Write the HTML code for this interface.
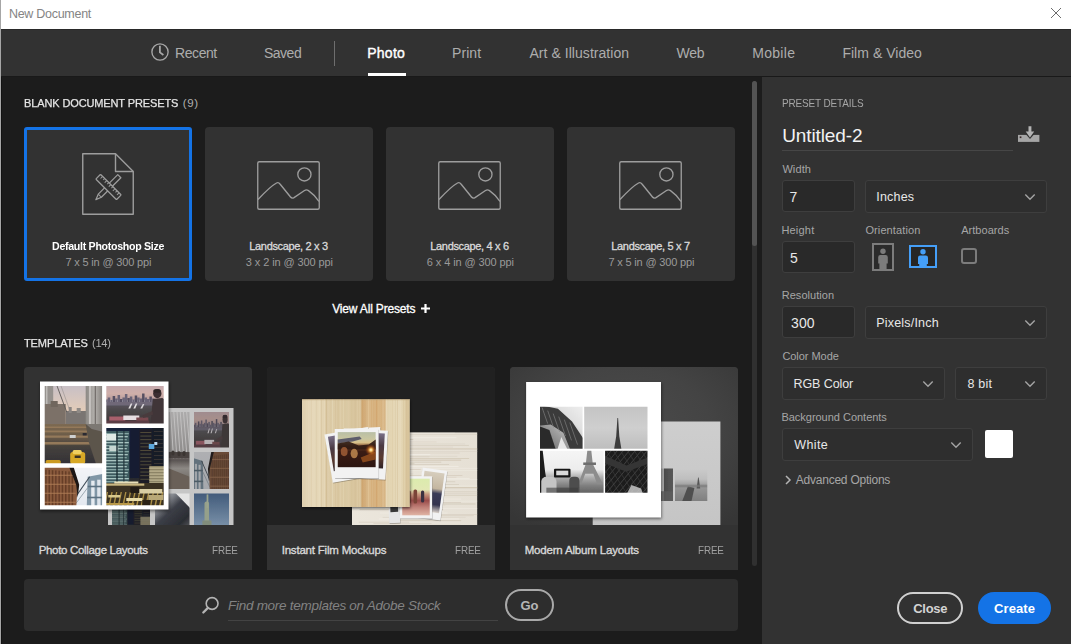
<!DOCTYPE html>
<html lang="en"><head><meta charset="utf-8"><title>New Document</title>
<style>
*{box-sizing:border-box;margin:0;padding:0}
html,body{width:1071px;height:644px;overflow:hidden;background:#1c1c1c}
body{font-family:"Liberation Sans",sans-serif;position:relative;-webkit-font-smoothing:antialiased}
.a{position:absolute}
.t{position:absolute;white-space:nowrap;transform-origin:0 50%;display:block}
#win{position:absolute;left:0;top:0;width:1071px;height:644px;background:#1c1c1c;overflow:hidden}
#titlebar{left:0;top:0;width:1071px;height:29px;background:#fff}
#edge-l{left:0;top:0;width:1px;height:644px;background:#a6a6a6}
#edge-l2{left:1px;top:29px;width:1px;height:615px;background:rgba(0,0,0,.35)}
#tabs{left:1px;top:29px;width:1070px;height:48px;background:#323232;border-top:1px solid #292929;border-bottom:1px solid #191919}
#tab-ul{left:368px;top:73px;width:38px;height:3px;background:#fff}
#tab-div{left:334px;top:41px;width:1px;height:25px;background:#6e6e6e}
#right{left:762px;top:77px;width:309px;height:567px;background:#323232}
.card{position:absolute;top:127px;width:168px;height:154px;background:#323232;border-radius:4px}
.card.sel{border:3px solid #1473e6;border-radius:3px}
.tcard{position:absolute;top:367px;width:228px;height:203px;background:#323232;border-radius:4px 4px 0 0;overflow:hidden}
.thumb{position:absolute;left:0;top:0;width:228px;height:158px;overflow:hidden}
#search{left:24px;top:579px;width:714px;height:52px;background:#2d2d2d;border-radius:4px}
#search-ul{left:228px;top:620px;width:270px;height:1px;background:#434343}
.pill{position:absolute;border-radius:16px}
#go{left:505px;top:589px;width:49px;height:32px;border:2px solid #a9a9a9}
#close{left:897px;top:592px;width:66px;height:32px;border:2px solid #d0d0d0}
#create{left:978px;top:592px;width:73px;height:32px;background:#1473e6}
.inp{position:absolute;height:32px;background:#292929;border:1px solid #3e3e3e;border-radius:3px}
.sel2{position:absolute;height:33px;background:#2e2e2e;border:1px solid #3e3e3e;border-radius:3px}
#name-ul{left:782px;top:150px;width:231px;height:1px;background:#464646}
#swatch{left:985px;top:430px;width:28px;height:28px;background:#fff;border-radius:2px}
#sb{left:752px;top:81px;width:5px;height:165px;background:#535353;border-radius:3px}
#sbtrack{left:752px;top:81px;width:5px;height:485px;background:#303030;border-radius:3px}
#chk{left:961px;top:248px;width:16px;height:16px;border:2px solid #7c7c7c;border-radius:3px}
svg{position:absolute;overflow:visible}
nav,main,aside,section{display:block;position:static}
</style></head>
<body>
<div id="win">
<div id="titlebar" class="a">
<span class="t" style="left:8.90px;top:6.30px;font-size:12.5px;line-height:16px;color:#848484;letter-spacing:-0.273px;">New Document</span>
<svg class="a" style="left:1051px;top:8px" width="10" height="10" viewBox="0 0 10 10"><path d="M0 0 L10 10 M10 0 L0 10" stroke="#6c6c6c" stroke-width="1" fill="none"/></svg>
</div>
<div id="edge-l" class="a"></div><div id="edge-l2" class="a"></div>
<nav>
<div id="tabs" class="a"></div>
<svg class="a" style="left:150.5px;top:42.6px" width="18" height="18" viewBox="0 0 18 18"><circle cx="9" cy="9" r="8.1" fill="none" stroke="#a8a8a8" stroke-width="1.35"/><path d="M8.9 2.8 V9.4 L12.4 11.9" fill="none" stroke="#a8a8a8" stroke-width="1.8"/></svg>
<span class="t" style="left:175.00px;top:44.00px;font-size:14.0px;line-height:18px;color:#adadad;letter-spacing:-0.420px;">Recent</span>
<span class="t" style="left:263.90px;top:44.00px;font-size:14.0px;line-height:18px;color:#adadad;letter-spacing:-0.475px;">Saved</span>
<div id="tab-div" class="a"></div>
<span class="t" style="left:367.30px;top:44.00px;font-size:14.0px;line-height:18px;color:#ffffff;letter-spacing:0.225px;-webkit-text-stroke:0.4px #ffffff;">Photo</span>
<div id="tab-ul" class="a"></div>
<span class="t" style="left:452.00px;top:44.00px;font-size:14.0px;line-height:18px;color:#adadad;letter-spacing:0.075px;">Print</span>
<span class="t" style="left:529.40px;top:44.00px;font-size:14.0px;line-height:18px;color:#adadad;letter-spacing:0.053px;">Art &amp; Illustration</span>
<span class="t" style="left:676.50px;top:44.00px;font-size:14.0px;line-height:18px;color:#adadad;letter-spacing:-0.250px;">Web</span>
<span class="t" style="left:752.20px;top:44.00px;font-size:14.0px;line-height:18px;color:#adadad;letter-spacing:0.300px;">Mobile</span>
<span class="t" style="left:842.40px;top:44.00px;font-size:14.0px;line-height:18px;color:#adadad;letter-spacing:0.036px;">Film &amp; Video</span>
</nav>
<main>
<section>
<span class="t" style="left:23.57px;top:96.00px;font-size:11.5px;line-height:15px;color:#e6e6e6;letter-spacing:-0.138px;-webkit-text-stroke:0.25px #e6e6e6;transform:scaleX(0.9578);">BLANK DOCUMENT PRESETS</span>
<span class="t" style="left:182.80px;top:96.00px;font-size:11.5px;line-height:15px;color:#b0b0b0;letter-spacing:0.600px;">(9)</span>
<div class="card sel" style="left:24px"></div>
<svg class="a" style="left:82px;top:153px" width="52" height="62" viewBox="0 0 52 62"><path d="M0.75 0.75 H33.5 L51.25 18.5 V61.25 H0.75 Z" fill="none" stroke="#9d9d9d" stroke-width="1.4" stroke-linejoin="round"/><path d="M33.5 0.75 V18.5 H51.25" fill="none" stroke="#9d9d9d" stroke-width="1.4" stroke-linejoin="round"/><g transform="translate(26.3 34.2) rotate(-45)"><path d="M-12 -2.2 H15.6 V2.2 H-12 L-17.6 0 Z" fill="#323232" stroke="#9d9d9d" stroke-width="1.25" stroke-linejoin="round"/><path d="M-12 -2.2 V2.2" stroke="#9d9d9d" stroke-width="1"/></g><g transform="translate(26.5 34) rotate(45)"><rect x="-14.6" y="-3.3" width="29.2" height="6.6" rx="0.6" fill="#323232" stroke="#9d9d9d" stroke-width="1.25"/><path d="M-11.6 -3.3 v2.9" stroke="#9d9d9d" stroke-width="1" fill="none"/><path d="M-8.7 -3.3 v2.1" stroke="#9d9d9d" stroke-width="1" fill="none"/><path d="M-5.8 -3.3 v2.9" stroke="#9d9d9d" stroke-width="1" fill="none"/><path d="M-2.9 -3.3 v2.1" stroke="#9d9d9d" stroke-width="1" fill="none"/><path d="M0.0 -3.3 v2.9" stroke="#9d9d9d" stroke-width="1" fill="none"/><path d="M2.9 -3.3 v2.1" stroke="#9d9d9d" stroke-width="1" fill="none"/><path d="M5.8 -3.3 v2.9" stroke="#9d9d9d" stroke-width="1" fill="none"/><path d="M8.7 -3.3 v2.1" stroke="#9d9d9d" stroke-width="1" fill="none"/><path d="M11.6 -3.3 v2.9" stroke="#9d9d9d" stroke-width="1" fill="none"/></g></svg>
<span class="t" style="left:52.03px;top:239.00px;font-size:11.0px;line-height:14px;color:#ffffff;letter-spacing:-0.308px;font-weight:700;transform:scaleX(0.9660);">Default Photoshop Size</span>
<span class="t" style="left:65.40px;top:254.60px;font-size:11.0px;line-height:14px;color:#9a9a9a;letter-spacing:-0.165px;">7 x 5 in @ 300 ppi</span>
<div class="card" style="left:205px"></div>
<svg class="a" style="left:257px;top:161px" width="63" height="49" viewBox="0 0 63 49"><rect x="0.75" y="0.75" width="61.5" height="47.5" rx="1.5" fill="none" stroke="#9d9d9d" stroke-width="1.35"/><circle cx="47.4" cy="13.4" r="6.6" fill="none" stroke="#9d9d9d" stroke-width="1.35"/><path d="M1 38.5 C8 31 14 25 19.5 22 Q21.5 21 23 23 L33.5 36 Q35 37.8 37 36.6 L47.5 29.5 Q49.5 28.3 51.5 29.6 C55 32 59 36 62 40.5" fill="none" stroke="#9d9d9d" stroke-width="1.35" stroke-linejoin="round"/></svg>
<span class="t" style="left:249.30px;top:239.00px;font-size:11.0px;line-height:14px;color:#dadada;letter-spacing:-0.333px;-webkit-text-stroke:0.3px #dadada;">Landscape, 2 x 3</span>
<span class="t" style="left:245.85px;top:254.60px;font-size:11.0px;line-height:14px;color:#9a9a9a;letter-spacing:-0.100px;">3 x 2 in @ 300 ppi</span>
<div class="card" style="left:386px"></div>
<svg class="a" style="left:438px;top:161px" width="63" height="49" viewBox="0 0 63 49"><rect x="0.75" y="0.75" width="61.5" height="47.5" rx="1.5" fill="none" stroke="#9d9d9d" stroke-width="1.35"/><circle cx="47.4" cy="13.4" r="6.6" fill="none" stroke="#9d9d9d" stroke-width="1.35"/><path d="M1 38.5 C8 31 14 25 19.5 22 Q21.5 21 23 23 L33.5 36 Q35 37.8 37 36.6 L47.5 29.5 Q49.5 28.3 51.5 29.6 C55 32 59 36 62 40.5" fill="none" stroke="#9d9d9d" stroke-width="1.35" stroke-linejoin="round"/></svg>
<span class="t" style="left:430.30px;top:239.00px;font-size:11.0px;line-height:14px;color:#dadada;letter-spacing:-0.333px;-webkit-text-stroke:0.3px #dadada;">Landscape, 4 x 6</span>
<span class="t" style="left:426.85px;top:254.60px;font-size:11.0px;line-height:14px;color:#9a9a9a;letter-spacing:-0.100px;">6 x 4 in @ 300 ppi</span>
<div class="card" style="left:567px"></div>
<svg class="a" style="left:619px;top:161px" width="63" height="49" viewBox="0 0 63 49"><rect x="0.75" y="0.75" width="61.5" height="47.5" rx="1.5" fill="none" stroke="#9d9d9d" stroke-width="1.35"/><circle cx="47.4" cy="13.4" r="6.6" fill="none" stroke="#9d9d9d" stroke-width="1.35"/><path d="M1 38.5 C8 31 14 25 19.5 22 Q21.5 21 23 23 L33.5 36 Q35 37.8 37 36.6 L47.5 29.5 Q49.5 28.3 51.5 29.6 C55 32 59 36 62 40.5" fill="none" stroke="#9d9d9d" stroke-width="1.35" stroke-linejoin="round"/></svg>
<span class="t" style="left:611.30px;top:239.00px;font-size:11.0px;line-height:14px;color:#dadada;letter-spacing:-0.333px;-webkit-text-stroke:0.3px #dadada;">Landscape, 5 x 7</span>
<span class="t" style="left:608.40px;top:254.60px;font-size:11.0px;line-height:14px;color:#9a9a9a;letter-spacing:-0.165px;">7 x 5 in @ 300 ppi</span>
<span class="t" style="left:332.25px;top:300.70px;font-size:12.0px;line-height:16px;color:#ffffff;letter-spacing:-0.173px;-webkit-text-stroke:0.3px #ffffff;">View All Presets</span>
<svg class="a" style="left:421px;top:304px" width="9" height="9" viewBox="0 0 9 9"><path d="M4.5 0 V9 M0 4.5 H9" stroke="#fff" stroke-width="2.2" fill="none"/></svg>
</section>
<section>
<span class="t" style="left:24.02px;top:336.00px;font-size:11.5px;line-height:15px;color:#e6e6e6;letter-spacing:-0.138px;-webkit-text-stroke:0.25px #e6e6e6;transform:scaleX(0.9598);">TEMPLATES</span>
<span class="t" style="left:92.43px;top:336.00px;font-size:11.5px;line-height:15px;color:#b0b0b0;letter-spacing:-0.322px;transform:scaleX(0.9704);">(14)</span>
<div class="tcard" style="left:24px"><div class="thumb"><svg width="228" height="158" viewBox="0 0 228 158" style="position:absolute;left:0;top:0;overflow:hidden"><defs><filter id="sh1" x="-10%" y="-10%" width="120%" height="120%"><feGaussianBlur stdDeviation="1.6"/></filter></defs><rect x="84.00" y="41.00" width="125.50" height="120.00" fill="#c6c6c6" /><g transform="translate(144.50 45.00)" ><defs><clipPath id="c3"><rect x="0" y="0" width="21.00" height="77.00"/></clipPath><filter id="f4" x="-10%" y="-10%" width="120%" height="120%"><feGaussianBlur stdDeviation="0.5"/></filter><linearGradient id="lg2" x1="0" y1="0" x2="0" y2="1"><stop offset="0" stop-color="#aeadad"/><stop offset="0.5" stop-color="#8f8d8c"/><stop offset="0.62" stop-color="#5a5452"/><stop offset="0.72" stop-color="#8c8884"/><stop offset="1" stop-color="#5a534d"/></linearGradient></defs><g clip-path="url(#c3)"><g filter="url(#f4)"><rect x="-2.00" y="-2.00" width="25.00" height="81.00" fill="url(#lg2)" /><line x1="2.0" y1="-2.0" x2="5.0" y2="46.2" stroke="#c9c8c8" stroke-width="0.8" /><line x1="5.2" y1="-2.0" x2="8.4" y2="46.2" stroke="#c9c8c8" stroke-width="0.8" /><line x1="8.4" y1="-2.0" x2="11.8" y2="46.2" stroke="#c9c8c8" stroke-width="0.8" /><line x1="11.6" y1="-2.0" x2="15.2" y2="46.2" stroke="#c9c8c8" stroke-width="0.8" /><line x1="14.8" y1="-2.0" x2="18.6" y2="46.2" stroke="#c9c8c8" stroke-width="0.8" /><line x1="18.0" y1="-2.0" x2="22.0" y2="46.2" stroke="#c9c8c8" stroke-width="0.8" /><rect x="-2.00" y="40.04" width="25.00" height="6.00" fill="#4a4341" /><rect x="3.00" y="38.50" width="3.00" height="5.00" fill="#3a3432" rx="1.5"/><rect x="9.00" y="39.27" width="3.00" height="5.00" fill="#3a3432" rx="1.5"/><rect x="14.00" y="38.88" width="3.00" height="5.00" fill="#3a3432" rx="1.5"/><polygon points="-2.0,55.4 23.0,65.5 23.0,79.0 -2.0,79.0" fill="#6a6058" /></g></g></g><g transform="translate(170.00 45.00)" ><defs><clipPath id="c7"><rect x="0" y="0" width="35.00" height="35.50"/></clipPath><filter id="f8" x="-10%" y="-10%" width="120%" height="120%"><feGaussianBlur stdDeviation="0.5"/></filter><linearGradient id="lg5" x1="0" y1="0" x2="0" y2="1"><stop offset="0" stop-color="#c3a9b0"/><stop offset="0.6" stop-color="#d0afa9"/><stop offset="1" stop-color="#b89c9c"/></linearGradient><linearGradient id="lg6" x1="0" y1="0" x2="0" y2="1"><stop offset="0" stop-color="#5b5560"/><stop offset="0.4" stop-color="#4a4748"/><stop offset="1" stop-color="#3a3033"/></linearGradient></defs><g clip-path="url(#c7)"><g filter="url(#f8)"><g transform="scale(0.6098 0.9441)"><rect x="-2.00" y="-2.00" width="62.00" height="16.00" fill="url(#lg5)" /><rect x="-1.00" y="13.50" width="2.50" height="4.00" fill="#575062" /><rect x="1.45" y="11.50" width="2.50" height="6.00" fill="#6b6477" /><rect x="3.90" y="14.00" width="2.50" height="3.50" fill="#6b6477" /><rect x="6.35" y="10.00" width="2.50" height="7.50" fill="#575062" /><rect x="8.80" y="12.50" width="2.50" height="5.00" fill="#6b6477" /><rect x="11.25" y="9.00" width="2.50" height="8.50" fill="#6b6477" /><rect x="13.70" y="13.00" width="2.50" height="4.50" fill="#575062" /><rect x="16.15" y="11.50" width="2.50" height="6.00" fill="#6b6477" /><rect x="18.60" y="8.00" width="2.50" height="9.50" fill="#6b6477" /><rect x="21.05" y="12.00" width="2.50" height="5.50" fill="#575062" /><rect x="23.50" y="10.50" width="2.50" height="7.00" fill="#6b6477" /><rect x="25.95" y="13.50" width="2.50" height="4.00" fill="#6b6477" /><rect x="28.40" y="9.50" width="2.50" height="8.00" fill="#575062" /><rect x="30.85" y="11.50" width="2.50" height="6.00" fill="#6b6477" /><rect x="33.30" y="12.50" width="2.50" height="5.00" fill="#6b6477" /><rect x="35.75" y="7.50" width="2.50" height="10.00" fill="#575062" /><rect x="38.20" y="11.50" width="2.50" height="6.00" fill="#6b6477" /><rect x="40.65" y="13.00" width="2.50" height="4.50" fill="#6b6477" /><rect x="43.10" y="10.50" width="2.50" height="7.00" fill="#575062" /><rect x="45.55" y="12.50" width="2.50" height="5.00" fill="#6b6477" /><rect x="-2.00" y="16.00" width="62.00" height="24.00" fill="url(#lg6)" /><rect x="-2.00" y="16.00" width="62.00" height="3.50" fill="#6f6878" /><polygon points="22.0,22.5 24.5,17.5 26.0,17.5 24.0,22.5" fill="#e4e0e2" /><polygon points="27.0,22.5 29.5,17.5 31.0,17.5 29.0,22.5" fill="#e4e0e2" /><polygon points="34.0,22.5 36.5,18.0 38.0,18.0 36.0,22.5" fill="#d8d4d8" /><rect x="3.00" y="30.50" width="16.00" height="6.00" fill="#a8606c" /><rect x="17.00" y="29.50" width="16.00" height="4.50" fill="#e6dfe2" /><rect x="30.00" y="31.50" width="12.00" height="5.00" fill="#7a4a50" /><rect x="-2.00" y="34.50" width="45.00" height="5.00" fill="#5a3c44" /><ellipse cx="51" cy="7.6" rx="4.2" ry="4.6" fill="#3b2f32"/><rect x="47.00" y="3.20" width="7.50" height="3.50" fill="#2e2528" rx="1.7"/><polygon points="46.5,13.0 56.0,12.0 59.0,14.0 59.0,40.0 44.5,40.0 45.5,24.0" fill="#3f3538" /><polygon points="36.0,29.5 46.0,25.0 47.0,28.5 37.0,32.0" fill="#4a3a3c" /><rect x="-2.00" y="-2.00" width="62.00" height="42.00" fill="rgba(60,60,60,.28)" /></g></g></g></g><g transform="translate(170.00 85.00)" ><defs><clipPath id="c10"><rect x="0" y="0" width="35.00" height="37.00"/></clipPath><filter id="f11" x="-10%" y="-10%" width="120%" height="120%"><feGaussianBlur stdDeviation="0.5"/></filter><linearGradient id="lg9" x1="0" y1="0" x2="0" y2="1"><stop offset="0" stop-color="#f3f4f8"/><stop offset="1" stop-color="#e3e8ef"/></linearGradient></defs><g clip-path="url(#c10)"><g filter="url(#f11)"><g transform="scale(0.6098 0.9867) translate(57.4 0) scale(-1 1)"><rect x="-2.00" y="-2.00" width="62.00" height="42.00" fill="url(#lg9)" /><polygon points="43.0,9.0 59.0,6.0 59.0,40.0 42.0,40.0" fill="#8096a6" /><rect x="46.50" y="13.00" width="3.40" height="27.00" fill="#e6ebf0" /><rect x="52.50" y="12.00" width="3.40" height="28.00" fill="#dfe5ec" /><rect x="43.00" y="18.00" width="16.00" height="1.60" fill="#5c7282" /><rect x="42.50" y="29.00" width="17.00" height="1.60" fill="#5c7282" /><line x1="31.0" y1="29.0" x2="45.0" y2="9.0" stroke="#3e4a56" stroke-width="1.1" /><line x1="31.0" y1="36.0" x2="43.0" y2="20.0" stroke="#7d8c98" stroke-width="0.7" /><polygon points="-2.0,-2.0 26.0,-2.0 33.0,17.0 31.5,40.0 -2.0,40.0" fill="#8a5a3c" /><rect x="0.50" y="2.00" width="1.50" height="38.00" fill="#5a3522" opacity=".75"/><rect x="3.80" y="2.25" width="1.50" height="38.00" fill="#5a3522" opacity=".75"/><rect x="7.10" y="2.50" width="1.50" height="38.00" fill="#5a3522" opacity=".75"/><rect x="10.40" y="2.75" width="1.50" height="38.00" fill="#5a3522" opacity=".75"/><rect x="13.70" y="3.00" width="1.50" height="38.00" fill="#5a3522" opacity=".75"/><rect x="17.00" y="3.25" width="1.50" height="38.00" fill="#5a3522" opacity=".75"/><rect x="20.30" y="3.50" width="1.50" height="38.00" fill="#5a3522" opacity=".75"/><rect x="23.60" y="3.75" width="1.50" height="38.00" fill="#5a3522" opacity=".75"/><rect x="26.90" y="4.00" width="1.50" height="38.00" fill="#5a3522" opacity=".75"/><rect x="-2.00" y="7.00" width="33.00" height="1.20" fill="#b4805a" opacity=".7"/><rect x="-2.00" y="16.00" width="33.00" height="1.20" fill="#b4805a" opacity=".7"/><rect x="-2.00" y="25.00" width="33.00" height="1.20" fill="#b4805a" opacity=".7"/><rect x="-2.00" y="34.00" width="33.00" height="1.20" fill="#b4805a" opacity=".7"/><polygon points="24.0,-2.0 28.5,-2.0 34.5,17.0 33.0,30.0 31.5,17.0" fill="#1b1512" /><rect x="-2.00" y="-2.00" width="62.00" height="42.00" fill="rgba(50,50,50,.35)" /></g></g></g></g><g transform="translate(88.00 126.50)" ><defs><clipPath id="c13"><rect x="0" y="0" width="38.00" height="32.00"/></clipPath><filter id="f14" x="-10%" y="-10%" width="120%" height="120%"><feGaussianBlur stdDeviation="0.5"/></filter><linearGradient id="lg12" x1="0" y1="0" x2="0" y2="1"><stop offset="0" stop-color="#16213a"/><stop offset="0.55" stop-color="#1a2236"/><stop offset="0.75" stop-color="#3a3526"/><stop offset="1" stop-color="#8a7236"/></linearGradient></defs><g clip-path="url(#c13)"><g filter="url(#f14)"><g transform="translate(0 -2.00) scale(0.6620)"><rect x="-2.00" y="-2.00" width="62.00" height="82.00" fill="url(#lg12)" /><rect x="-2.00" y="3.00" width="25.00" height="52.00" fill="#3e5a5e" /><rect x="-2.00" y="5.00" width="24.50" height="1.30" fill="#86a6a4" /><rect x="-2.00" y="8.00" width="23.50" height="1.30" fill="#a8c4c0" /><rect x="-2.00" y="11.00" width="22.50" height="1.30" fill="#86a6a4" /><rect x="-2.00" y="14.00" width="24.50" height="1.30" fill="#a8c4c0" /><rect x="-2.00" y="17.00" width="23.50" height="1.30" fill="#86a6a4" /><rect x="-2.00" y="20.00" width="22.50" height="1.30" fill="#a8c4c0" /><rect x="-2.00" y="23.00" width="24.50" height="1.30" fill="#86a6a4" /><rect x="-2.00" y="26.00" width="23.50" height="1.30" fill="#a8c4c0" /><rect x="-2.00" y="29.00" width="22.50" height="1.30" fill="#86a6a4" /><rect x="-2.00" y="32.00" width="24.50" height="1.30" fill="#a8c4c0" /><rect x="-2.00" y="35.00" width="23.50" height="1.30" fill="#86a6a4" /><rect x="-2.00" y="38.00" width="22.50" height="1.30" fill="#a8c4c0" /><rect x="-2.00" y="41.00" width="24.50" height="1.30" fill="#86a6a4" /><rect x="-2.00" y="44.00" width="23.50" height="1.30" fill="#a8c4c0" /><rect x="-2.00" y="47.00" width="22.50" height="1.30" fill="#86a6a4" /><rect x="-2.00" y="50.00" width="24.50" height="1.30" fill="#a8c4c0" /><rect x="-2.00" y="53.00" width="23.50" height="1.30" fill="#86a6a4" /><rect x="0.00" y="6.00" width="10.00" height="6.50" fill="#dfe8e4" /><rect x="3.00" y="18.00" width="9.00" height="5.00" fill="#c6d6d2" /><rect x="10.00" y="3.00" width="1.40" height="52.00" fill="#1c2e34" /><rect x="17.00" y="3.00" width="1.20" height="52.00" fill="#22363c" /><rect x="24.00" y="-2.00" width="9.00" height="52.00" fill="#121a32" /><rect x="33.00" y="1.00" width="13.00" height="56.00" fill="#1d1e26" /><rect x="34.00" y="4.00" width="11.00" height="0.90" fill="#55503c" /><rect x="34.00" y="7.60" width="11.00" height="0.90" fill="#55503c" /><rect x="34.00" y="11.20" width="11.00" height="0.90" fill="#55503c" /><rect x="34.00" y="14.80" width="11.00" height="0.90" fill="#55503c" /><rect x="34.00" y="18.40" width="11.00" height="0.90" fill="#55503c" /><rect x="34.00" y="22.00" width="11.00" height="0.90" fill="#55503c" /><rect x="34.00" y="25.60" width="11.00" height="0.90" fill="#55503c" /><rect x="34.00" y="29.20" width="11.00" height="0.90" fill="#55503c" /><rect x="34.00" y="32.80" width="11.00" height="0.90" fill="#55503c" /><rect x="34.00" y="36.40" width="11.00" height="0.90" fill="#55503c" /><rect x="34.00" y="40.00" width="11.00" height="0.90" fill="#55503c" /><rect x="34.00" y="43.60" width="11.00" height="0.90" fill="#55503c" /><rect x="34.00" y="47.20" width="11.00" height="0.90" fill="#55503c" /><rect x="34.00" y="50.80" width="11.00" height="0.90" fill="#55503c" /><rect x="46.00" y="-2.00" width="13.00" height="40.00" fill="#191b27" /><rect x="47.50" y="3.00" width="9.00" height="0.80" fill="#3c3a38" /><rect x="47.50" y="7.00" width="9.00" height="0.80" fill="#3c3a38" /><rect x="47.50" y="11.00" width="9.00" height="0.80" fill="#3c3a38" /><rect x="47.50" y="15.00" width="9.00" height="0.80" fill="#3c3a38" /><rect x="47.50" y="19.00" width="9.00" height="0.80" fill="#3c3a38" /><rect x="47.50" y="23.00" width="9.00" height="0.80" fill="#3c3a38" /><rect x="47.50" y="27.00" width="9.00" height="0.80" fill="#3c3a38" /><rect x="47.50" y="31.00" width="9.00" height="0.80" fill="#3c3a38" /><rect x="47.50" y="35.00" width="9.00" height="0.80" fill="#3c3a38" /><rect x="42.50" y="16.00" width="5.50" height="5.00" fill="#5aa6dc" /><rect x="48.00" y="14.00" width="3.00" height="3.00" fill="#b8d8f0" /><rect x="43.00" y="38.00" width="16.00" height="18.00" fill="#8c8466" /><rect x="43.00" y="39.50" width="16.00" height="1.20" fill="#c2ba96" /><rect x="43.00" y="42.50" width="16.00" height="1.20" fill="#c2ba96" /><rect x="43.00" y="45.50" width="16.00" height="1.20" fill="#c2ba96" /><rect x="43.00" y="48.50" width="16.00" height="1.20" fill="#c2ba96" /><rect x="43.00" y="51.50" width="16.00" height="1.20" fill="#c2ba96" /><rect x="43.00" y="54.50" width="16.00" height="1.20" fill="#c2ba96" /><rect x="-2.00" y="55.00" width="62.00" height="26.00" fill="#3b3220" /><rect x="-2.00" y="55.50" width="40.00" height="2.20" fill="#c9b782" /><rect x="8.00" y="53.50" width="24.00" height="2.00" fill="#e8dfb8" /><polygon points="-3.0,80.0 0.5,64.0 1.8,64.0 -1.4,80.0" fill="#c9a850" opacity=".8"/><polygon points="1.6,80.0 5.1,64.0 6.4,64.0 3.2,80.0" fill="#c9a850" opacity=".8"/><polygon points="6.2,80.0 9.7,64.0 11.0,64.0 7.8,80.0" fill="#c9a850" opacity=".8"/><polygon points="10.8,80.0 14.3,64.0 15.6,64.0 12.4,80.0" fill="#c9a850" opacity=".8"/><polygon points="15.4,80.0 18.9,64.0 20.2,64.0 17.0,80.0" fill="#c9a850" opacity=".8"/><polygon points="20.0,80.0 23.5,64.0 24.8,64.0 21.6,80.0" fill="#c9a850" opacity=".8"/><polygon points="24.6,80.0 28.1,64.0 29.4,64.0 26.2,80.0" fill="#c9a850" opacity=".8"/><polygon points="29.2,80.0 32.7,64.0 34.0,64.0 30.8,80.0" fill="#c9a850" opacity=".8"/><polygon points="33.8,80.0 37.3,64.0 38.6,64.0 35.4,80.0" fill="#c9a850" opacity=".8"/><polygon points="38.4,80.0 41.9,64.0 43.2,64.0 40.0,80.0" fill="#c9a850" opacity=".8"/><polygon points="43.0,80.0 46.5,64.0 47.8,64.0 44.6,80.0" fill="#c9a850" opacity=".8"/><polygon points="47.6,80.0 51.1,64.0 52.4,64.0 49.2,80.0" fill="#c9a850" opacity=".8"/><polygon points="52.2,80.0 55.7,64.0 57.0,64.0 53.8,80.0" fill="#c9a850" opacity=".8"/><polygon points="56.8,80.0 60.3,64.0 61.6,64.0 58.4,80.0" fill="#c9a850" opacity=".8"/><rect x="32.00" y="61.00" width="24.00" height="4.50" fill="#d8cda4" /><rect x="42.00" y="67.00" width="15.00" height="5.00" fill="#b8a878" /><rect x="2.00" y="67.00" width="12.00" height="2.50" fill="#d8c88c" /><rect x="20.00" y="70.00" width="16.00" height="3.00" fill="#e6d9a6" /><rect x="-2.00" y="75.00" width="30.00" height="2.00" fill="#b89848" /><rect x="24.00" y="59.00" width="9.00" height="6.00" fill="#241f14" /><rect x="36.00" y="72.00" width="8.00" height="6.00" fill="#2a2416" /><rect x="-2.00" y="-2.00" width="62.00" height="82.00" fill="rgba(40,40,40,.35)" /></g></g></g></g><g transform="translate(131.00 126.50)" ><defs><clipPath id="c16"><rect x="0" y="0" width="34.50" height="32.00"/></clipPath><filter id="f17" x="-10%" y="-10%" width="120%" height="120%"><feGaussianBlur stdDeviation="0.6"/></filter><linearGradient id="lg15" x1="0" y1="0" x2="1" y2="1"><stop offset="0" stop-color="#dcdcdc"/><stop offset="0.25" stop-color="#9a9da3"/><stop offset="0.5" stop-color="#3c3f47"/><stop offset="0.8" stop-color="#2b2d33"/><stop offset="1" stop-color="#5c5e62"/></linearGradient></defs><g clip-path="url(#c16)"><g filter="url(#f17)"><rect x="-2.00" y="-2.00" width="38.50" height="36.00" fill="url(#lg15)" /><polygon points="19.0,-2.0 36.5,-2.0 36.5,16.0" fill="#e4e4e4" /></g></g></g><g transform="translate(170.00 126.50)" ><defs><clipPath id="c19"><rect x="0" y="0" width="35.00" height="45.00"/></clipPath><filter id="f20" x="-10%" y="-10%" width="120%" height="120%"><feGaussianBlur stdDeviation="0.5"/></filter><linearGradient id="lg18" x1="0" y1="0" x2="0" y2="1"><stop offset="0" stop-color="#3f5878"/><stop offset="0.7" stop-color="#7990a8"/><stop offset="1" stop-color="#98a6b2"/></linearGradient></defs><g clip-path="url(#c19)"><g filter="url(#f20)"><rect x="-2.00" y="-2.00" width="39.00" height="49.00" fill="url(#lg18)" /><rect x="10.50" y="8.10" width="4.55" height="45.00" fill="#95a08a" rx="2"/><rect x="12.60" y="0.90" width="1.75" height="13.50" fill="#9aa48e" /><rect x="8.40" y="27.00" width="9.10" height="45.00" fill="#818d7c" /></g></g></g><rect x="16.00" y="15.50" width="129.50" height="129.00" fill="rgba(0,0,0,.45)" filter="url(#sh1)"/><rect x="16.00" y="14.50" width="128.50" height="128.00" fill="#ffffff" /><g transform="translate(20.70 19.00)" ><defs><clipPath id="c24"><rect x="0" y="0" width="57.40" height="77.20"/></clipPath><filter id="f25" x="-10%" y="-10%" width="120%" height="120%"><feGaussianBlur stdDeviation="0.55"/></filter><linearGradient id="lg21" x1="0" y1="0" x2="0" y2="1"><stop offset="0" stop-color="#c6bfc6"/><stop offset="0.75" stop-color="#e8ceb6"/><stop offset="1" stop-color="#c9b3a0"/></linearGradient><linearGradient id="lg22" x1="0" y1="0" x2="0" y2="1"><stop offset="0" stop-color="#7d6a52"/><stop offset="0.3" stop-color="#6a5a48"/><stop offset="0.55" stop-color="#45403c"/><stop offset="1" stop-color="#303036"/></linearGradient><linearGradient id="lg23" x1="0" y1="0" x2="1" y2="0"><stop offset="0" stop-color="#8b8884"/><stop offset="0.5" stop-color="#b4b1ad"/><stop offset="1" stop-color="#7f7b77"/></linearGradient></defs><g clip-path="url(#c24)"><g filter="url(#f25)"><g transform="scale(1.0000 1.0000)"><rect x="-2.00" y="-2.00" width="62.00" height="42.00" fill="url(#lg21)" /><rect x="-2.00" y="-2.00" width="10.50" height="22.00" fill="#96928e" /><rect x="1.50" y="-2.00" width="1.20" height="20.00" fill="#c9c6c3" /><rect x="-2.00" y="18.00" width="23.00" height="22.00" fill="#7b7167" /><rect x="6.00" y="15.00" width="7.00" height="6.00" fill="#6f665d" /><rect x="21.00" y="25.00" width="21.00" height="14.00" fill="#7a7572" /><rect x="24.00" y="21.00" width="3.00" height="6.00" fill="#8a8582" /><rect x="32.00" y="22.00" width="4.00" height="5.00" fill="#8f8a86" /><rect x="41.00" y="-2.00" width="18.00" height="42.00" fill="url(#lg23)" /><rect x="44.50" y="-2.00" width="1.50" height="40.00" fill="#d0cdca" /><rect x="50.00" y="-2.00" width="1.20" height="40.00" fill="#6e6a66" /><line x1="12.0" y1="-1.0" x2="22.0" y2="26.0" stroke="#5e5a58" stroke-width="0.9" /><line x1="16.0" y1="-1.0" x2="25.0" y2="24.0" stroke="#8a8684" stroke-width="0.5" /><rect x="-2.00" y="38.00" width="62.00" height="42.00" fill="url(#lg22)" /><rect x="-2.00" y="40.50" width="46.00" height="1.50" fill="#94795a" /><rect x="-2.00" y="44.50" width="48.50" height="1.85" fill="#94795a" /><rect x="-2.00" y="49.50" width="51.00" height="2.20" fill="#94795a" /><rect x="-2.00" y="56.00" width="53.50" height="2.55" fill="#94795a" /><polygon points="41.0,38.0 59.0,38.0 59.0,80.0 52.0,80.0 44.0,56.0" fill="#5c544c" /><polygon points="41.0,38.0 59.0,38.0 59.0,46.0 47.0,43.0" fill="#7c7873" /><rect x="25.00" y="49.00" width="6.00" height="3.00" fill="#cfd0d0" /><rect x="38.00" y="47.00" width="4.00" height="2.50" fill="#2a2a30" /><rect x="25.50" y="66.00" width="15.00" height="12.00" fill="#d8a926" rx="2.5"/><rect x="28.00" y="64.00" width="9.00" height="4.00" fill="#f0d060" rx="1.5"/><rect x="1.00" y="74.00" width="15.00" height="5.00" fill="#cc9b22" rx="1.5"/><rect x="30.00" y="69.50" width="6.00" height="2.50" fill="#3a3020" /></g></g></g></g><g transform="translate(82.30 19.00)" ><defs><clipPath id="c28"><rect x="0" y="0" width="57.40" height="37.60"/></clipPath><filter id="f29" x="-10%" y="-10%" width="120%" height="120%"><feGaussianBlur stdDeviation="0.5"/></filter><linearGradient id="lg26" x1="0" y1="0" x2="0" y2="1"><stop offset="0" stop-color="#c3a9b0"/><stop offset="0.6" stop-color="#d0afa9"/><stop offset="1" stop-color="#b89c9c"/></linearGradient><linearGradient id="lg27" x1="0" y1="0" x2="0" y2="1"><stop offset="0" stop-color="#5b5560"/><stop offset="0.4" stop-color="#4a4748"/><stop offset="1" stop-color="#3a3033"/></linearGradient></defs><g clip-path="url(#c28)"><g filter="url(#f29)"><g transform="scale(1.0000 1.0000)"><rect x="-2.00" y="-2.00" width="62.00" height="16.00" fill="url(#lg26)" /><rect x="-1.00" y="13.50" width="2.50" height="4.00" fill="#575062" /><rect x="1.45" y="11.50" width="2.50" height="6.00" fill="#6b6477" /><rect x="3.90" y="14.00" width="2.50" height="3.50" fill="#6b6477" /><rect x="6.35" y="10.00" width="2.50" height="7.50" fill="#575062" /><rect x="8.80" y="12.50" width="2.50" height="5.00" fill="#6b6477" /><rect x="11.25" y="9.00" width="2.50" height="8.50" fill="#6b6477" /><rect x="13.70" y="13.00" width="2.50" height="4.50" fill="#575062" /><rect x="16.15" y="11.50" width="2.50" height="6.00" fill="#6b6477" /><rect x="18.60" y="8.00" width="2.50" height="9.50" fill="#6b6477" /><rect x="21.05" y="12.00" width="2.50" height="5.50" fill="#575062" /><rect x="23.50" y="10.50" width="2.50" height="7.00" fill="#6b6477" /><rect x="25.95" y="13.50" width="2.50" height="4.00" fill="#6b6477" /><rect x="28.40" y="9.50" width="2.50" height="8.00" fill="#575062" /><rect x="30.85" y="11.50" width="2.50" height="6.00" fill="#6b6477" /><rect x="33.30" y="12.50" width="2.50" height="5.00" fill="#6b6477" /><rect x="35.75" y="7.50" width="2.50" height="10.00" fill="#575062" /><rect x="38.20" y="11.50" width="2.50" height="6.00" fill="#6b6477" /><rect x="40.65" y="13.00" width="2.50" height="4.50" fill="#6b6477" /><rect x="43.10" y="10.50" width="2.50" height="7.00" fill="#575062" /><rect x="45.55" y="12.50" width="2.50" height="5.00" fill="#6b6477" /><rect x="-2.00" y="16.00" width="62.00" height="24.00" fill="url(#lg27)" /><rect x="-2.00" y="16.00" width="62.00" height="3.50" fill="#6f6878" /><polygon points="22.0,22.5 24.5,17.5 26.0,17.5 24.0,22.5" fill="#e4e0e2" /><polygon points="27.0,22.5 29.5,17.5 31.0,17.5 29.0,22.5" fill="#e4e0e2" /><polygon points="34.0,22.5 36.5,18.0 38.0,18.0 36.0,22.5" fill="#d8d4d8" /><rect x="3.00" y="30.50" width="16.00" height="6.00" fill="#a8606c" /><rect x="17.00" y="29.50" width="16.00" height="4.50" fill="#e6dfe2" /><rect x="30.00" y="31.50" width="12.00" height="5.00" fill="#7a4a50" /><rect x="-2.00" y="34.50" width="45.00" height="5.00" fill="#5a3c44" /><ellipse cx="51" cy="7.6" rx="4.2" ry="4.6" fill="#3b2f32"/><rect x="47.00" y="3.20" width="7.50" height="3.50" fill="#2e2528" rx="1.7"/><polygon points="46.5,13.0 56.0,12.0 59.0,14.0 59.0,40.0 44.5,40.0 45.5,24.0" fill="#3f3538" /><polygon points="36.0,29.5 46.0,25.0 47.0,28.5 37.0,32.0" fill="#4a3a3c" /></g></g></g></g><g transform="translate(82.30 61.00)" ><defs><clipPath id="c31"><rect x="0" y="0" width="57.40" height="77.20"/></clipPath><filter id="f32" x="-10%" y="-10%" width="120%" height="120%"><feGaussianBlur stdDeviation="0.5"/></filter><linearGradient id="lg30" x1="0" y1="0" x2="0" y2="1"><stop offset="0" stop-color="#16213a"/><stop offset="0.55" stop-color="#1a2236"/><stop offset="0.75" stop-color="#3a3526"/><stop offset="1" stop-color="#8a7236"/></linearGradient></defs><g clip-path="url(#c31)"><g filter="url(#f32)"><g transform="translate(0 0.00) scale(1.0000)"><rect x="-2.00" y="-2.00" width="62.00" height="82.00" fill="url(#lg30)" /><rect x="-2.00" y="3.00" width="25.00" height="52.00" fill="#3e5a5e" /><rect x="-2.00" y="5.00" width="24.50" height="1.30" fill="#86a6a4" /><rect x="-2.00" y="8.00" width="23.50" height="1.30" fill="#a8c4c0" /><rect x="-2.00" y="11.00" width="22.50" height="1.30" fill="#86a6a4" /><rect x="-2.00" y="14.00" width="24.50" height="1.30" fill="#a8c4c0" /><rect x="-2.00" y="17.00" width="23.50" height="1.30" fill="#86a6a4" /><rect x="-2.00" y="20.00" width="22.50" height="1.30" fill="#a8c4c0" /><rect x="-2.00" y="23.00" width="24.50" height="1.30" fill="#86a6a4" /><rect x="-2.00" y="26.00" width="23.50" height="1.30" fill="#a8c4c0" /><rect x="-2.00" y="29.00" width="22.50" height="1.30" fill="#86a6a4" /><rect x="-2.00" y="32.00" width="24.50" height="1.30" fill="#a8c4c0" /><rect x="-2.00" y="35.00" width="23.50" height="1.30" fill="#86a6a4" /><rect x="-2.00" y="38.00" width="22.50" height="1.30" fill="#a8c4c0" /><rect x="-2.00" y="41.00" width="24.50" height="1.30" fill="#86a6a4" /><rect x="-2.00" y="44.00" width="23.50" height="1.30" fill="#a8c4c0" /><rect x="-2.00" y="47.00" width="22.50" height="1.30" fill="#86a6a4" /><rect x="-2.00" y="50.00" width="24.50" height="1.30" fill="#a8c4c0" /><rect x="-2.00" y="53.00" width="23.50" height="1.30" fill="#86a6a4" /><rect x="0.00" y="6.00" width="10.00" height="6.50" fill="#dfe8e4" /><rect x="3.00" y="18.00" width="9.00" height="5.00" fill="#c6d6d2" /><rect x="10.00" y="3.00" width="1.40" height="52.00" fill="#1c2e34" /><rect x="17.00" y="3.00" width="1.20" height="52.00" fill="#22363c" /><rect x="24.00" y="-2.00" width="9.00" height="52.00" fill="#121a32" /><rect x="33.00" y="1.00" width="13.00" height="56.00" fill="#1d1e26" /><rect x="34.00" y="4.00" width="11.00" height="0.90" fill="#55503c" /><rect x="34.00" y="7.60" width="11.00" height="0.90" fill="#55503c" /><rect x="34.00" y="11.20" width="11.00" height="0.90" fill="#55503c" /><rect x="34.00" y="14.80" width="11.00" height="0.90" fill="#55503c" /><rect x="34.00" y="18.40" width="11.00" height="0.90" fill="#55503c" /><rect x="34.00" y="22.00" width="11.00" height="0.90" fill="#55503c" /><rect x="34.00" y="25.60" width="11.00" height="0.90" fill="#55503c" /><rect x="34.00" y="29.20" width="11.00" height="0.90" fill="#55503c" /><rect x="34.00" y="32.80" width="11.00" height="0.90" fill="#55503c" /><rect x="34.00" y="36.40" width="11.00" height="0.90" fill="#55503c" /><rect x="34.00" y="40.00" width="11.00" height="0.90" fill="#55503c" /><rect x="34.00" y="43.60" width="11.00" height="0.90" fill="#55503c" /><rect x="34.00" y="47.20" width="11.00" height="0.90" fill="#55503c" /><rect x="34.00" y="50.80" width="11.00" height="0.90" fill="#55503c" /><rect x="46.00" y="-2.00" width="13.00" height="40.00" fill="#191b27" /><rect x="47.50" y="3.00" width="9.00" height="0.80" fill="#3c3a38" /><rect x="47.50" y="7.00" width="9.00" height="0.80" fill="#3c3a38" /><rect x="47.50" y="11.00" width="9.00" height="0.80" fill="#3c3a38" /><rect x="47.50" y="15.00" width="9.00" height="0.80" fill="#3c3a38" /><rect x="47.50" y="19.00" width="9.00" height="0.80" fill="#3c3a38" /><rect x="47.50" y="23.00" width="9.00" height="0.80" fill="#3c3a38" /><rect x="47.50" y="27.00" width="9.00" height="0.80" fill="#3c3a38" /><rect x="47.50" y="31.00" width="9.00" height="0.80" fill="#3c3a38" /><rect x="47.50" y="35.00" width="9.00" height="0.80" fill="#3c3a38" /><rect x="42.50" y="16.00" width="5.50" height="5.00" fill="#5aa6dc" /><rect x="48.00" y="14.00" width="3.00" height="3.00" fill="#b8d8f0" /><rect x="43.00" y="38.00" width="16.00" height="18.00" fill="#8c8466" /><rect x="43.00" y="39.50" width="16.00" height="1.20" fill="#c2ba96" /><rect x="43.00" y="42.50" width="16.00" height="1.20" fill="#c2ba96" /><rect x="43.00" y="45.50" width="16.00" height="1.20" fill="#c2ba96" /><rect x="43.00" y="48.50" width="16.00" height="1.20" fill="#c2ba96" /><rect x="43.00" y="51.50" width="16.00" height="1.20" fill="#c2ba96" /><rect x="43.00" y="54.50" width="16.00" height="1.20" fill="#c2ba96" /><rect x="-2.00" y="55.00" width="62.00" height="26.00" fill="#3b3220" /><rect x="-2.00" y="55.50" width="40.00" height="2.20" fill="#c9b782" /><rect x="8.00" y="53.50" width="24.00" height="2.00" fill="#e8dfb8" /><polygon points="-3.0,80.0 0.5,64.0 1.8,64.0 -1.4,80.0" fill="#c9a850" opacity=".8"/><polygon points="1.6,80.0 5.1,64.0 6.4,64.0 3.2,80.0" fill="#c9a850" opacity=".8"/><polygon points="6.2,80.0 9.7,64.0 11.0,64.0 7.8,80.0" fill="#c9a850" opacity=".8"/><polygon points="10.8,80.0 14.3,64.0 15.6,64.0 12.4,80.0" fill="#c9a850" opacity=".8"/><polygon points="15.4,80.0 18.9,64.0 20.2,64.0 17.0,80.0" fill="#c9a850" opacity=".8"/><polygon points="20.0,80.0 23.5,64.0 24.8,64.0 21.6,80.0" fill="#c9a850" opacity=".8"/><polygon points="24.6,80.0 28.1,64.0 29.4,64.0 26.2,80.0" fill="#c9a850" opacity=".8"/><polygon points="29.2,80.0 32.7,64.0 34.0,64.0 30.8,80.0" fill="#c9a850" opacity=".8"/><polygon points="33.8,80.0 37.3,64.0 38.6,64.0 35.4,80.0" fill="#c9a850" opacity=".8"/><polygon points="38.4,80.0 41.9,64.0 43.2,64.0 40.0,80.0" fill="#c9a850" opacity=".8"/><polygon points="43.0,80.0 46.5,64.0 47.8,64.0 44.6,80.0" fill="#c9a850" opacity=".8"/><polygon points="47.6,80.0 51.1,64.0 52.4,64.0 49.2,80.0" fill="#c9a850" opacity=".8"/><polygon points="52.2,80.0 55.7,64.0 57.0,64.0 53.8,80.0" fill="#c9a850" opacity=".8"/><polygon points="56.8,80.0 60.3,64.0 61.6,64.0 58.4,80.0" fill="#c9a850" opacity=".8"/><rect x="32.00" y="61.00" width="24.00" height="4.50" fill="#d8cda4" /><rect x="42.00" y="67.00" width="15.00" height="5.00" fill="#b8a878" /><rect x="2.00" y="67.00" width="12.00" height="2.50" fill="#d8c88c" /><rect x="20.00" y="70.00" width="16.00" height="3.00" fill="#e6d9a6" /><rect x="-2.00" y="75.00" width="30.00" height="2.00" fill="#b89848" /><rect x="24.00" y="59.00" width="9.00" height="6.00" fill="#241f14" /><rect x="36.00" y="72.00" width="8.00" height="6.00" fill="#2a2416" /></g></g></g></g><g transform="translate(20.70 100.70)" ><defs><clipPath id="c34"><rect x="0" y="0" width="57.40" height="37.50"/></clipPath><filter id="f35" x="-10%" y="-10%" width="120%" height="120%"><feGaussianBlur stdDeviation="0.5"/></filter><linearGradient id="lg33" x1="0" y1="0" x2="0" y2="1"><stop offset="0" stop-color="#f3f4f8"/><stop offset="1" stop-color="#e3e8ef"/></linearGradient></defs><g clip-path="url(#c34)"><g filter="url(#f35)"><g transform="scale(1.0000 1.0000) "><rect x="-2.00" y="-2.00" width="62.00" height="42.00" fill="url(#lg33)" /><polygon points="43.0,9.0 59.0,6.0 59.0,40.0 42.0,40.0" fill="#8096a6" /><rect x="46.50" y="13.00" width="3.40" height="27.00" fill="#e6ebf0" /><rect x="52.50" y="12.00" width="3.40" height="28.00" fill="#dfe5ec" /><rect x="43.00" y="18.00" width="16.00" height="1.60" fill="#5c7282" /><rect x="42.50" y="29.00" width="17.00" height="1.60" fill="#5c7282" /><line x1="31.0" y1="29.0" x2="45.0" y2="9.0" stroke="#3e4a56" stroke-width="1.1" /><line x1="31.0" y1="36.0" x2="43.0" y2="20.0" stroke="#7d8c98" stroke-width="0.7" /><polygon points="-2.0,-2.0 26.0,-2.0 33.0,17.0 31.5,40.0 -2.0,40.0" fill="#8a5a3c" /><rect x="0.50" y="2.00" width="1.50" height="38.00" fill="#5a3522" opacity=".75"/><rect x="3.80" y="2.25" width="1.50" height="38.00" fill="#5a3522" opacity=".75"/><rect x="7.10" y="2.50" width="1.50" height="38.00" fill="#5a3522" opacity=".75"/><rect x="10.40" y="2.75" width="1.50" height="38.00" fill="#5a3522" opacity=".75"/><rect x="13.70" y="3.00" width="1.50" height="38.00" fill="#5a3522" opacity=".75"/><rect x="17.00" y="3.25" width="1.50" height="38.00" fill="#5a3522" opacity=".75"/><rect x="20.30" y="3.50" width="1.50" height="38.00" fill="#5a3522" opacity=".75"/><rect x="23.60" y="3.75" width="1.50" height="38.00" fill="#5a3522" opacity=".75"/><rect x="26.90" y="4.00" width="1.50" height="38.00" fill="#5a3522" opacity=".75"/><rect x="-2.00" y="7.00" width="33.00" height="1.20" fill="#b4805a" opacity=".7"/><rect x="-2.00" y="16.00" width="33.00" height="1.20" fill="#b4805a" opacity=".7"/><rect x="-2.00" y="25.00" width="33.00" height="1.20" fill="#b4805a" opacity=".7"/><rect x="-2.00" y="34.00" width="33.00" height="1.20" fill="#b4805a" opacity=".7"/><polygon points="24.0,-2.0 28.5,-2.0 34.5,17.0 33.0,30.0 31.5,17.0" fill="#1b1512" /></g></g></g></g></svg></div></div>
<span class="t" style="left:38.67px;top:543.40px;font-size:11.5px;line-height:15px;color:#d8d8d8;letter-spacing:-0.322px;-webkit-text-stroke:0.35px #d8d8d8;">Photo Collage Layouts</span>
<span class="t" style="left:211.61px;top:543.40px;font-size:11.0px;line-height:14px;color:#a0a0a0;letter-spacing:-0.132px;transform:scaleX(0.8948);">FREE</span>
<div class="tcard" style="left:267px"><div class="thumb"><svg width="228" height="158" viewBox="0 0 228 158" style="position:absolute;left:0;top:0;overflow:hidden"><defs><filter id="sh36" x="-10%" y="-10%" width="120%" height="120%"><feGaussianBlur stdDeviation="1.4"/></filter><linearGradient id="lg37" x1="0" y1="0" x2="1" y2="0"><stop offset="0" stop-color="#ebe6dc"/><stop offset="1" stop-color="#e6e0d5"/></linearGradient><linearGradient id="lg38" x1="0" y1="0" x2="0" y2="1"><stop offset="0" stop-color="#d6cdbd"/><stop offset="0.4" stop-color="#c4b6a0"/><stop offset="0.52" stop-color="#3a3c58"/><stop offset="0.8" stop-color="#34344e"/><stop offset="1" stop-color="#d9d1c9"/></linearGradient><linearGradient id="lg39" x1="0" y1="0" x2="0" y2="1"><stop offset="0" stop-color="#dbebad"/><stop offset="0.3" stop-color="#e2e8b4"/><stop offset="0.42" stop-color="#c99a80"/><stop offset="0.6" stop-color="#9a4c4a"/><stop offset="0.78" stop-color="#c08078"/><stop offset="1" stop-color="#e0b4a4"/></linearGradient><linearGradient id="lg40" x1="0" y1="0" x2="1" y2="0"><stop offset="0" stop-color="#decfae"/><stop offset="0.1" stop-color="#e6d8ba"/><stop offset="0.215" stop-color="#e2d2b0"/><stop offset="0.225" stop-color="#d2bd94"/><stop offset="0.24" stop-color="#ddcca8"/><stop offset="0.4" stop-color="#dac8a2"/><stop offset="0.54" stop-color="#d8c49c"/><stop offset="0.555" stop-color="#d0ab78"/><stop offset="0.62" stop-color="#dab98a"/><stop offset="0.7" stop-color="#d6b07c"/><stop offset="0.765" stop-color="#dcbd90"/><stop offset="0.78" stop-color="#e2d2ae"/><stop offset="0.9" stop-color="#e6d9ba"/><stop offset="0.955" stop-color="#e0d0aa"/><stop offset="0.965" stop-color="#d4be94"/><stop offset="1" stop-color="#decda8"/></linearGradient><linearGradient id="lg41" x1="0" y1="0" x2="0" y2="1"><stop offset="0" stop-color="#7a7088"/><stop offset="0.35" stop-color="#4a3a44"/><stop offset="0.7" stop-color="#5a3a30"/><stop offset="1" stop-color="#2e2226"/></linearGradient><linearGradient id="lg42" x1="0" y1="0" x2="0" y2="1"><stop offset="0" stop-color="#b9bfa6"/><stop offset="0.2" stop-color="#c9c6a0"/><stop offset="0.3" stop-color="#d8c08a"/><stop offset="0.4" stop-color="#7a4a2a"/><stop offset="0.55" stop-color="#3a1c14"/><stop offset="1" stop-color="#2c1510"/></linearGradient><radialGradient id="rg43" cx="0.5" cy="0.5" r="0.5"><stop offset="0" stop-color="#fffbe0" stop-opacity="1"/><stop offset="0.22" stop-color="#ffd070" stop-opacity="0.95"/><stop offset="0.55" stop-color="#e07820" stop-opacity="0.5"/><stop offset="1" stop-color="#803010" stop-opacity="0"/></radialGradient></defs><rect x="0.00" y="0.00" width="228.00" height="158.00" fill="#212121" /><rect x="85.00" y="65.40" width="125.20" height="93.00" fill="url(#lg37)" /><rect x="92.54" y="65.86" width="95.33" height="0.54" fill="#f2eee6" opacity=".75"/><rect x="114.14" y="67.18" width="96.06" height="0.61" fill="#d3cabb" opacity=".75"/><rect x="88.49" y="68.95" width="47.71" height="0.71" fill="#f2eee6" opacity=".75"/><rect x="96.16" y="70.20" width="93.33" height="0.97" fill="#f2eee6" opacity=".75"/><rect x="87.48" y="72.07" width="58.79" height="0.78" fill="#cbc1b0" opacity=".75"/><rect x="92.21" y="73.33" width="50.01" height="0.65" fill="#cbc1b0" opacity=".75"/><rect x="113.56" y="74.68" width="55.97" height="0.55" fill="#d3cabb" opacity=".75"/><rect x="115.95" y="76.55" width="82.20" height="0.77" fill="#dad2c4" opacity=".75"/><rect x="131.17" y="77.97" width="70.73" height="0.62" fill="#cbc1b0" opacity=".75"/><rect x="97.20" y="79.66" width="88.83" height="0.76" fill="#dad2c4" opacity=".75"/><rect x="99.40" y="81.18" width="110.80" height="0.56" fill="#c9beaa" opacity=".75"/><rect x="102.10" y="82.23" width="108.10" height="0.71" fill="#d3cabb" opacity=".75"/><rect x="113.65" y="84.21" width="96.55" height="0.66" fill="#dad2c4" opacity=".75"/><rect x="113.99" y="85.58" width="78.78" height="0.92" fill="#dad2c4" opacity=".75"/><rect x="118.21" y="86.98" width="45.16" height="0.85" fill="#f2eee6" opacity=".75"/><rect x="126.10" y="88.89" width="64.19" height="0.69" fill="#dad2c4" opacity=".75"/><rect x="108.08" y="89.62" width="54.28" height="0.56" fill="#d3cabb" opacity=".75"/><rect x="99.37" y="91.27" width="102.76" height="0.70" fill="#c9beaa" opacity=".75"/><rect x="107.46" y="92.66" width="86.70" height="0.94" fill="#c9beaa" opacity=".75"/><rect x="98.92" y="94.79" width="75.30" height="0.68" fill="#c9beaa" opacity=".75"/><rect x="92.55" y="96.37" width="54.98" height="0.62" fill="#cbc1b0" opacity=".75"/><rect x="126.55" y="97.11" width="55.50" height="0.64" fill="#cbc1b0" opacity=".75"/><rect x="103.46" y="98.94" width="88.14" height="0.98" fill="#f2eee6" opacity=".75"/><rect x="117.75" y="100.86" width="92.45" height="0.73" fill="#f2eee6" opacity=".75"/><rect x="104.95" y="101.91" width="48.80" height="0.82" fill="#d3cabb" opacity=".75"/><rect x="134.23" y="103.25" width="75.97" height="0.55" fill="#f2eee6" opacity=".75"/><rect x="85.01" y="104.64" width="52.86" height="0.55" fill="#dad2c4" opacity=".75"/><rect x="88.52" y="106.59" width="57.68" height="0.69" fill="#dad2c4" opacity=".75"/><rect x="115.11" y="108.36" width="80.30" height="0.56" fill="#c9beaa" opacity=".75"/><rect x="108.30" y="109.89" width="81.13" height="0.54" fill="#d3cabb" opacity=".75"/><rect x="122.02" y="111.20" width="80.68" height="0.85" fill="#f2eee6" opacity=".75"/><rect x="132.55" y="112.12" width="77.65" height="0.57" fill="#f2eee6" opacity=".75"/><rect x="122.91" y="114.33" width="65.34" height="0.82" fill="#d3cabb" opacity=".75"/><rect x="98.06" y="115.66" width="71.17" height="0.58" fill="#cbc1b0" opacity=".75"/><rect x="123.95" y="117.03" width="68.02" height="0.61" fill="#cbc1b0" opacity=".75"/><rect x="125.92" y="118.74" width="84.28" height="0.61" fill="#f2eee6" opacity=".75"/><rect x="121.55" y="119.99" width="88.65" height="0.90" fill="#c9beaa" opacity=".75"/><rect x="119.63" y="121.31" width="90.57" height="0.72" fill="#dad2c4" opacity=".75"/><rect x="103.23" y="123.36" width="58.74" height="0.61" fill="#cbc1b0" opacity=".75"/><rect x="109.13" y="124.37" width="101.07" height="0.81" fill="#d3cabb" opacity=".75"/><rect x="117.65" y="125.98" width="92.55" height="0.54" fill="#d3cabb" opacity=".75"/><rect x="124.12" y="127.83" width="86.08" height="0.74" fill="#cbc1b0" opacity=".75"/><rect x="116.79" y="128.95" width="47.37" height="0.97" fill="#c9beaa" opacity=".75"/><rect x="122.17" y="130.47" width="47.22" height="0.58" fill="#cbc1b0" opacity=".75"/><rect x="114.54" y="131.62" width="79.56" height="0.83" fill="#f2eee6" opacity=".75"/><rect x="134.02" y="133.76" width="76.18" height="0.68" fill="#f2eee6" opacity=".75"/><rect x="86.07" y="135.04" width="107.95" height="0.86" fill="#d3cabb" opacity=".75"/><rect x="131.68" y="136.52" width="76.87" height="0.94" fill="#cbc1b0" opacity=".75"/><rect x="95.64" y="137.62" width="82.60" height="0.88" fill="#dad2c4" opacity=".75"/><rect x="105.95" y="139.31" width="51.14" height="0.96" fill="#dad2c4" opacity=".75"/><rect x="118.12" y="141.32" width="92.08" height="0.76" fill="#f2eee6" opacity=".75"/><rect x="92.59" y="142.20" width="83.40" height="0.94" fill="#cbc1b0" opacity=".75"/><rect x="123.80" y="144.09" width="52.73" height="0.57" fill="#f2eee6" opacity=".75"/><rect x="112.82" y="145.68" width="67.71" height="0.76" fill="#f2eee6" opacity=".75"/><rect x="123.82" y="146.99" width="86.38" height="0.53" fill="#cbc1b0" opacity=".75"/><rect x="123.61" y="148.32" width="83.16" height="0.78" fill="#d3cabb" opacity=".75"/><rect x="115.63" y="149.95" width="82.97" height="0.76" fill="#dad2c4" opacity=".75"/><rect x="111.66" y="151.46" width="80.63" height="0.97" fill="#f2eee6" opacity=".75"/><rect x="132.11" y="153.30" width="62.07" height="0.78" fill="#cbc1b0" opacity=".75"/><rect x="91.86" y="154.77" width="50.34" height="0.72" fill="#d3cabb" opacity=".75"/><rect x="106.42" y="156.14" width="58.08" height="0.65" fill="#d3cabb" opacity=".75"/><rect x="92.72" y="157.82" width="100.87" height="0.83" fill="#cbc1b0" opacity=".75"/><g transform="translate(164.50 127.00) rotate(8)"><rect x="-12.10" y="-24.20" width="25.00" height="50.00" fill="rgba(0,0,0,.28)"/><rect x="-12.50" y="-25.00" width="25.00" height="50.00" fill="#f2f2f2"/><rect x="-10.10" y="-22.00" width="20.20" height="40.00" fill="url(#lg38)"/></g><g transform="translate(127.40 147.00) rotate(-2)"><rect x="-5.10" y="-8.20" width="11.00" height="18.00" fill="rgba(0,0,0,.28)"/><rect x="-5.50" y="-9.00" width="11.00" height="18.00" fill="#e6e6e6"/><rect x="-3.90" y="-7.80" width="7.80" height="5.80" fill="#3a3a3a"/></g><g transform="translate(149.00 130.40) rotate(0)"><rect x="-15.75" y="-20.30" width="32.30" height="42.20" fill="rgba(0,0,0,.28)"/><rect x="-16.15" y="-21.10" width="32.30" height="42.20" fill="#f2f2f2"/><rect x="-13.75" y="-18.70" width="27.50" height="36.60" fill="url(#lg39)"/><rect x="-9" y="-7" width="3.6" height="13" rx="1.5" fill="#6a3a30"/><rect x="-2.5" y="-8" width="3.6" height="14" rx="1.5" fill="#7a4438"/><rect x="5" y="-7" width="3.2" height="12" rx="1.5" fill="#3a3040"/></g><rect x="35.50" y="33.40" width="107.80" height="107.80" fill="rgba(0,0,0,.6)" filter="url(#sh36)"/><rect x="35.00" y="32.20" width="107.80" height="107.80" fill="url(#lg40)" /><rect x="35.70" y="32.20" width="0.47" height="107.80" fill="#ece0c4" opacity="0.32"/><rect x="39.24" y="32.20" width="0.60" height="107.80" fill="#ece0c4" opacity="0.30"/><rect x="41.60" y="32.20" width="0.51" height="107.80" fill="#ece0c4" opacity="0.55"/><rect x="43.98" y="32.20" width="0.61" height="107.80" fill="#d0bb92" opacity="0.35"/><rect x="47.07" y="32.20" width="0.41" height="107.80" fill="#ece0c4" opacity="0.38"/><rect x="48.92" y="32.20" width="0.57" height="107.80" fill="#d0bb92" opacity="0.40"/><rect x="51.68" y="32.20" width="0.89" height="107.80" fill="#f0e6cc" opacity="0.54"/><rect x="54.43" y="32.20" width="0.53" height="107.80" fill="#c9b083" opacity="0.52"/><rect x="57.22" y="32.20" width="0.78" height="107.80" fill="#ece0c4" opacity="0.50"/><rect x="60.51" y="32.20" width="0.87" height="107.80" fill="#ece0c4" opacity="0.29"/><rect x="63.50" y="32.20" width="0.69" height="107.80" fill="#d0bb92" opacity="0.28"/><rect x="65.17" y="32.20" width="0.74" height="107.80" fill="#ece0c4" opacity="0.52"/><rect x="68.12" y="32.20" width="0.41" height="107.80" fill="#c9b083" opacity="0.49"/><rect x="70.60" y="32.20" width="0.83" height="107.80" fill="#c9b083" opacity="0.33"/><rect x="73.35" y="32.20" width="0.41" height="107.80" fill="#ece0c4" opacity="0.53"/><rect x="76.22" y="32.20" width="0.46" height="107.80" fill="#f0e6cc" opacity="0.53"/><rect x="79.76" y="32.20" width="0.53" height="107.80" fill="#f0e6cc" opacity="0.31"/><rect x="81.67" y="32.20" width="0.55" height="107.80" fill="#f0e6cc" opacity="0.34"/><rect x="84.60" y="32.20" width="0.49" height="107.80" fill="#d0bb92" opacity="0.49"/><rect x="87.89" y="32.20" width="0.42" height="107.80" fill="#c9b083" opacity="0.47"/><rect x="90.06" y="32.20" width="0.49" height="107.80" fill="#ece0c4" opacity="0.32"/><rect x="92.64" y="32.20" width="0.73" height="107.80" fill="#ece0c4" opacity="0.45"/><rect x="95.46" y="32.20" width="0.84" height="107.80" fill="#c98f4e" opacity="0.34"/><rect x="97.76" y="32.20" width="0.51" height="107.80" fill="#cf9c5c" opacity="0.50"/><rect x="101.05" y="32.20" width="0.72" height="107.80" fill="#e8cfa4" opacity="0.55"/><rect x="104.08" y="32.20" width="0.82" height="107.80" fill="#cf9c5c" opacity="0.27"/><rect x="106.49" y="32.20" width="0.53" height="107.80" fill="#cf9c5c" opacity="0.27"/><rect x="109.10" y="32.20" width="0.59" height="107.80" fill="#c98f4e" opacity="0.45"/><rect x="111.34" y="32.20" width="0.52" height="107.80" fill="#e8cfa4" opacity="0.26"/><rect x="113.92" y="32.20" width="0.53" height="107.80" fill="#cf9c5c" opacity="0.33"/><rect x="117.55" y="32.20" width="0.89" height="107.80" fill="#c98f4e" opacity="0.35"/><rect x="119.14" y="32.20" width="0.84" height="107.80" fill="#f0e6cc" opacity="0.36"/><rect x="121.80" y="32.20" width="0.59" height="107.80" fill="#ece0c4" opacity="0.33"/><rect x="125.29" y="32.20" width="0.52" height="107.80" fill="#c9b083" opacity="0.28"/><rect x="128.18" y="32.20" width="0.47" height="107.80" fill="#c9b083" opacity="0.37"/><rect x="130.26" y="32.20" width="0.71" height="107.80" fill="#c9b083" opacity="0.43"/><rect x="133.24" y="32.20" width="0.78" height="107.80" fill="#ece0c4" opacity="0.48"/><rect x="136.16" y="32.20" width="0.65" height="107.80" fill="#d0bb92" opacity="0.47"/><rect x="138.77" y="32.20" width="0.42" height="107.80" fill="#ece0c4" opacity="0.47"/><rect x="141.67" y="32.20" width="0.47" height="107.80" fill="#c9b083" opacity="0.50"/><rect x="35.00" y="32.20" width="107.80" height="1.00" fill="#b9a27a" opacity=".7"/><g transform="translate(93.00 85.60) rotate(-3)"><rect x="-21.10" y="-23.70" width="43.00" height="49.00" fill="rgba(0,0,0,.28)"/><rect x="-21.50" y="-24.50" width="43.00" height="49.00" fill="#f2f2f2"/><rect x="-18.50" y="-21.70" width="37.00" height="35.20" fill="url(#lg41)"/></g><g transform="translate(83.30 87.80) rotate(-9.8)"><rect x="-21.60" y="-23.70" width="44.00" height="49.00" fill="rgba(0,0,0,.28)"/><rect x="-22.00" y="-24.50" width="44.00" height="49.00" fill="#f2f2f2"/><rect x="-19.00" y="-21.70" width="38.00" height="35.20" fill="url(#lg41)"/></g><g transform="translate(97.70 87.10) rotate(3)"><rect x="-21.60" y="-23.70" width="44.00" height="49.00" fill="rgba(0,0,0,.28)"/><rect x="-22.00" y="-24.50" width="44.00" height="49.00" fill="#f2f2f2"/><rect x="-19.00" y="-21.70" width="38.00" height="35.20" fill="url(#lg41)"/></g><g transform="translate(89.70 86.55) rotate(0)"><rect x="-21.55" y="-23.75" width="43.90" height="49.10" fill="rgba(0,0,0,.28)"/><rect x="-21.95" y="-24.55" width="43.90" height="49.10" fill="#f2f2f2"/><rect x="-18.95" y="-21.45" width="37.90" height="35.10" fill="url(#lg42)"/><path d="M-19 -14 L3 -17 L5 -14.5 L-4 -12 L-19 -10 Z" fill="#4a4a62" opacity=".85"/><path d="M-19 -10 L-8 -12 L2 -8 L12 -9 L19 -14 V-4 H-19 Z" fill="#2e1a14" opacity=".9"/><ellipse cx="-12.5" cy="-2" rx="3.4" ry="4.6" fill="#9a5a34" opacity=".9"/><ellipse cx="-2.5" cy="0" rx="3.6" ry="4.8" fill="#c08850" opacity=".85"/><path d="M4 4 L19 -2 V6 L6 9 Z" fill="#a85a20" opacity=".7"/><circle cx="14.2" cy="-3.6" r="6" fill="url(#rg43)"/></g></svg></div></div>
<span class="t" style="left:281.68px;top:543.40px;font-size:11.5px;line-height:15px;color:#d8d8d8;letter-spacing:-0.203px;-webkit-text-stroke:0.35px #d8d8d8;">Instant Film Mockups</span>
<span class="t" style="left:454.61px;top:543.40px;font-size:11.0px;line-height:14px;color:#a0a0a0;letter-spacing:-0.132px;transform:scaleX(0.8948);">FREE</span>
<div class="tcard" style="left:510px"><div class="thumb"><svg width="228" height="158" viewBox="0 0 228 158" style="position:absolute;left:0;top:0;overflow:hidden"><defs><filter id="sh44" x="-10%" y="-10%" width="120%" height="120%"><feGaussianBlur stdDeviation="1.8"/></filter><radialGradient id="rg45" cx="0.5" cy="0.38" r="0.75"><stop offset="0" stop-color="#4b4b4b"/><stop offset="0.5" stop-color="#444444"/><stop offset="1" stop-color="#363636"/></radialGradient><linearGradient id="lg46" x1="0" y1="0" x2="0" y2="1"><stop offset="0" stop-color="#cecece"/><stop offset="1" stop-color="#c5c5c5"/></linearGradient></defs><rect x="0.00" y="0.00" width="228.00" height="158.00" fill="url(#rg45)" /><rect x="82.70" y="54.50" width="127.70" height="104.00" fill="url(#lg46)" /><g transform="translate(151.00 101.40)" ><defs><clipPath id="c48"><rect x="0" y="0" width="12.00" height="32.60"/></clipPath><filter id="f49" x="-10%" y="-10%" width="120%" height="120%"><feGaussianBlur stdDeviation="0.4"/></filter><linearGradient id="lg47" x1="0" y1="0" x2="1" y2="0"><stop offset="0" stop-color="#b4b4b4"/><stop offset="0.28" stop-color="#a8a8a8"/><stop offset="0.34" stop-color="#4c4c4c"/><stop offset="0.85" stop-color="#585858"/><stop offset="1" stop-color="#8c8c8c"/></linearGradient></defs><g clip-path="url(#c48)"><g filter="url(#f49)"><rect x="-2.00" y="-2.00" width="16.00" height="36.60" fill="url(#lg47)" /><rect x="-2.00" y="22.82" width="16.00" height="13.04" fill="#5c5c5c" opacity=".8"/></g></g></g><g transform="translate(165.00 101.40)" ><defs><clipPath id="c51"><rect x="0" y="0" width="32.30" height="32.60"/></clipPath><filter id="f52" x="-10%" y="-10%" width="120%" height="120%"><feGaussianBlur stdDeviation="0.5"/></filter><linearGradient id="lg50" x1="0" y1="0" x2="0" y2="1"><stop offset="0" stop-color="#cdcdcd"/><stop offset="0.35" stop-color="#bebebe"/><stop offset="0.55" stop-color="#989898"/><stop offset="1" stop-color="#7c7c7c"/></linearGradient></defs><g clip-path="url(#c51)"><g filter="url(#f52)"><rect x="-2.00" y="-2.00" width="36.30" height="36.60" fill="url(#lg50)" /><polygon points="23.1,9.1 23.7,9.1 25.2,20.2 21.6,20.2" fill="#555" /><polygon points="6.5,34.6 12.9,17.9 19.4,19.6 16.1,34.6" fill="#505050" /><rect x="-2.00" y="16.30" width="36.30" height="2.61" fill="#7a7a7a" opacity=".7"/></g></g></g><rect x="16.60" y="16.50" width="135.00" height="135.50" fill="rgba(0,0,0,.5)" filter="url(#sh44)"/><rect x="16.10" y="15.00" width="134.90" height="135.50" fill="#ffffff" /><g transform="translate(30.00 39.80)" ><defs><clipPath id="c54"><rect x="0" y="0" width="42.60" height="42.00"/></clipPath><filter id="f55" x="-10%" y="-10%" width="120%" height="120%"><feGaussianBlur stdDeviation="0.5"/></filter><linearGradient id="lg53" x1="0" y1="1" x2="1" y2="0"><stop offset="0" stop-color="#5a5a5a"/><stop offset="0.4" stop-color="#a0a0a0"/><stop offset="0.7" stop-color="#e0e0e0"/><stop offset="1" stop-color="#f0f0f0"/></linearGradient></defs><g clip-path="url(#c54)"><g filter="url(#f55)"><rect x="-2.00" y="-2.00" width="46.60" height="46.00" fill="url(#lg53)" /><polygon points="-2.0,-2.0 17.9,2.0 32.0,14.7 44.6,33.6 44.6,44.0 30.7,44.0 23.4,26.0 10.7,17.6 -2.0,18.9" fill="#3a3a3a" /><polygon points="-2.0,18.9 9.4,23.1 16.2,44.0 -2.0,44.0" fill="#2c2c2c" /><polygon points="17.0,44.0 21.3,30.2 28.1,44.0" fill="#e6e6e6" /><line x1="2.1" y1="0.8" x2="7.7" y2="16.8" stroke="#8a8a8a" stroke-width="0.6" /><line x1="7.7" y1="3.8" x2="13.6" y2="21.0" stroke="#8a8a8a" stroke-width="0.6" /><line x1="13.2" y1="6.8" x2="19.6" y2="25.2" stroke="#8a8a8a" stroke-width="0.6" /><line x1="18.7" y1="9.8" x2="25.6" y2="29.4" stroke="#8a8a8a" stroke-width="0.6" /><line x1="24.3" y1="12.8" x2="31.5" y2="33.6" stroke="#8a8a8a" stroke-width="0.6" /><line x1="29.8" y1="15.8" x2="37.5" y2="37.8" stroke="#8a8a8a" stroke-width="0.6" /></g></g></g><g transform="translate(74.20 39.80)" ><defs><clipPath id="c57"><rect x="0" y="0" width="63.30" height="42.00"/></clipPath><filter id="f58" x="-10%" y="-10%" width="120%" height="120%"><feGaussianBlur stdDeviation="0.4"/></filter><linearGradient id="lg56" x1="0" y1="0" x2="0" y2="1"><stop offset="0" stop-color="#c3c3c3"/><stop offset="0.5" stop-color="#cfcfcf"/><stop offset="1" stop-color="#bcbcbc"/></linearGradient></defs><g clip-path="url(#c57)"><g filter="url(#f58)"><rect x="-2.00" y="-2.00" width="67.30" height="46.00" fill="url(#lg56)" /><polygon points="33.2,11.3 33.9,11.3 35.1,29.4 37.3,43.0 29.8,43.0 32.0,29.4" fill="#3c3c3c" /></g></g></g><g transform="translate(30.00 83.70)" ><defs><clipPath id="c60"><rect x="0" y="0" width="63.60" height="42.00"/></clipPath><filter id="f61" x="-10%" y="-10%" width="120%" height="120%"><feGaussianBlur stdDeviation="0.5"/></filter><linearGradient id="lg59" x1="0" y1="0" x2="0" y2="1"><stop offset="0" stop-color="#f6f6f6"/><stop offset="0.45" stop-color="#ededed"/><stop offset="0.62" stop-color="#b0b0b0"/><stop offset="0.8" stop-color="#808080"/><stop offset="1" stop-color="#5a5a5a"/></linearGradient></defs><g clip-path="url(#c60)"><g filter="url(#f61)"><rect x="-2.00" y="-2.00" width="67.60" height="46.00" fill="url(#lg59)" /><polygon points="-2.0,-2.0 2.5,-2.0 5.1,21.0 8.9,44.0 -2.0,44.0" fill="#1e1e1e" /><polygon points="47.4,-1.0 51.2,-1.0 52.8,13.4 63.0,33.6 57.2,33.6 53.4,23.1 45.2,23.1 41.3,33.6 38.2,33.6 45.8,13.4" fill="#8c8c8c" /><rect x="43.25" y="11.76" width="12.72" height="2.52" fill="#6e6e6e" /><rect x="1.27" y="26.04" width="15.26" height="21.00" fill="#c4c4c4" rx="5"/><rect x="29.26" y="26.04" width="10.18" height="21.00" fill="#4e4e4e" rx="4"/><rect x="13.99" y="18.06" width="16.54" height="8.82" fill="#161616" rx="1"/><rect x="16.22" y="19.95" width="12.08" height="4.62" fill="#dadada" /><rect x="6.36" y="36.96" width="31.80" height="8.40" fill="#3a3a3a" opacity=".6"/></g></g></g><g transform="translate(95.10 83.70)" ><defs><clipPath id="c62"><rect x="0" y="0" width="42.40" height="42.00"/></clipPath><filter id="f63" x="-10%" y="-10%" width="120%" height="120%"><feGaussianBlur stdDeviation="0.5"/></filter></defs><g clip-path="url(#c62)"><g filter="url(#f63)"><rect x="-2.00" y="-2.00" width="46.40" height="46.00" fill="#1f1f1f" /><line x1="-36.0" y1="44.0" x2="1.8" y2="-2.0" stroke="#4c4c4c" stroke-width="0.7" /><line x1="-42.0" y1="-2.0" x2="-12.6" y2="44.0" stroke="#3c3c3c" stroke-width="0.6" /><line x1="-30.0" y1="44.0" x2="7.8" y2="-2.0" stroke="#4c4c4c" stroke-width="0.7" /><line x1="-35.0" y1="-2.0" x2="-5.6" y2="44.0" stroke="#3c3c3c" stroke-width="0.6" /><line x1="-24.0" y1="44.0" x2="13.8" y2="-2.0" stroke="#4c4c4c" stroke-width="0.7" /><line x1="-28.0" y1="-2.0" x2="1.4" y2="44.0" stroke="#3c3c3c" stroke-width="0.6" /><line x1="-18.0" y1="44.0" x2="19.8" y2="-2.0" stroke="#4c4c4c" stroke-width="0.7" /><line x1="-21.0" y1="-2.0" x2="8.4" y2="44.0" stroke="#3c3c3c" stroke-width="0.6" /><line x1="-12.0" y1="44.0" x2="25.8" y2="-2.0" stroke="#4c4c4c" stroke-width="0.7" /><line x1="-14.0" y1="-2.0" x2="15.4" y2="44.0" stroke="#3c3c3c" stroke-width="0.6" /><line x1="-6.0" y1="44.0" x2="31.8" y2="-2.0" stroke="#4c4c4c" stroke-width="0.7" /><line x1="-7.0" y1="-2.0" x2="22.4" y2="44.0" stroke="#3c3c3c" stroke-width="0.6" /><line x1="0.0" y1="44.0" x2="37.8" y2="-2.0" stroke="#4c4c4c" stroke-width="0.7" /><line x1="0.0" y1="-2.0" x2="29.4" y2="44.0" stroke="#3c3c3c" stroke-width="0.6" /><line x1="6.0" y1="44.0" x2="43.8" y2="-2.0" stroke="#4c4c4c" stroke-width="0.7" /><line x1="7.0" y1="-2.0" x2="36.4" y2="44.0" stroke="#3c3c3c" stroke-width="0.6" /><line x1="12.0" y1="44.0" x2="49.8" y2="-2.0" stroke="#4c4c4c" stroke-width="0.7" /><line x1="14.0" y1="-2.0" x2="43.4" y2="44.0" stroke="#3c3c3c" stroke-width="0.6" /><line x1="18.0" y1="44.0" x2="55.8" y2="-2.0" stroke="#4c4c4c" stroke-width="0.7" /><line x1="21.0" y1="-2.0" x2="50.4" y2="44.0" stroke="#3c3c3c" stroke-width="0.6" /><line x1="24.0" y1="44.0" x2="61.8" y2="-2.0" stroke="#4c4c4c" stroke-width="0.7" /><line x1="28.0" y1="-2.0" x2="57.4" y2="44.0" stroke="#3c3c3c" stroke-width="0.6" /><line x1="30.0" y1="44.0" x2="67.8" y2="-2.0" stroke="#4c4c4c" stroke-width="0.7" /><line x1="35.0" y1="-2.0" x2="64.4" y2="44.0" stroke="#3c3c3c" stroke-width="0.6" /><line x1="36.0" y1="44.0" x2="73.8" y2="-2.0" stroke="#4c4c4c" stroke-width="0.7" /><line x1="42.0" y1="-2.0" x2="71.4" y2="44.0" stroke="#3c3c3c" stroke-width="0.6" /><line x1="42.0" y1="44.0" x2="79.8" y2="-2.0" stroke="#4c4c4c" stroke-width="0.7" /><line x1="49.0" y1="-2.0" x2="78.4" y2="44.0" stroke="#3c3c3c" stroke-width="0.6" /><line x1="48.0" y1="44.0" x2="85.8" y2="-2.0" stroke="#4c4c4c" stroke-width="0.7" /><line x1="56.0" y1="-2.0" x2="85.4" y2="44.0" stroke="#3c3c3c" stroke-width="0.6" /><line x1="54.0" y1="44.0" x2="91.8" y2="-2.0" stroke="#4c4c4c" stroke-width="0.7" /><line x1="63.0" y1="-2.0" x2="92.4" y2="44.0" stroke="#3c3c3c" stroke-width="0.6" /><polygon points="-2.0,4.2 21.2,14.7 44.4,6.3 44.4,12.6 21.2,21.0 -2.0,11.8" fill="#353535" /><polygon points="21.2,44.0 26.3,34.4 36.0,37.8 38.2,44.0" fill="#cfcfcf" opacity=".8"/></g></g></g></svg></div></div>
<span class="t" style="left:524.67px;top:543.40px;font-size:11.5px;line-height:15px;color:#d8d8d8;letter-spacing:-0.176px;-webkit-text-stroke:0.35px #d8d8d8;">Modern Album Layouts</span>
<span class="t" style="left:697.61px;top:543.40px;font-size:11.0px;line-height:14px;color:#a0a0a0;letter-spacing:-0.132px;transform:scaleX(0.8948);">FREE</span>
</section>
<div id="sbtrack" class="a"></div><div id="sb" class="a"></div>
<div id="search" class="a"></div>
<svg class="a" style="left:201px;top:596px" width="19" height="18" viewBox="0 0 19 18"><circle cx="11.1" cy="7.5" r="5.9" fill="none" stroke="#b4b4b4" stroke-width="1.6"/><path d="M6.9 11.9 L2.3 16.5" stroke="#b4b4b4" stroke-width="2.3" stroke-linecap="round"/></svg>
<span class="t" style="left:228.00px;top:597.00px;font-size:13.5px;line-height:18px;color:#828282;letter-spacing:-0.273px;font-style:italic;">Find more templates on Adobe Stock</span>
<div id="search-ul" class="a"></div>
<div id="go" class="a pill"></div>
<span class="t" style="left:520.50px;top:597.00px;font-size:13.0px;line-height:17px;color:#b6b6b6;font-weight:700;">Go</span>
</main>
<aside>
<div id="right" class="a"></div>
<span class="t" style="left:781.80px;top:95.70px;font-size:11.0px;line-height:14px;color:#a6a6a6;letter-spacing:-0.132px;transform:scaleX(0.9039);">PRESET DETAILS</span>
<span class="t" style="left:782.20px;top:122.90px;font-size:19.0px;line-height:25px;color:#f2f2f2;letter-spacing:-0.111px;">Untitled-2</span>
<div id="name-ul" class="a"></div>
<svg class="a" style="left:1017.6px;top:126px" width="22" height="16" viewBox="0 0 22 16"><rect x="0" y="8.9" width="21.4" height="7" fill="#a6a6a6"/><path d="M12 12.9 L7.2 7.6 H16.8 Z" fill="#323232"/><path d="M10.5 0.3 H13.4 V5.4 H16.2 L11.95 11.4 L7.7 5.4 H10.5 Z" fill="#b4b4b4"/><rect x="1.7" y="10.4" width="1.7" height="1.7" fill="#3a2a2a"/></svg>
<span class="t" style="left:782.40px;top:161.90px;font-size:11.0px;line-height:14px;color:#a6a6a6;letter-spacing:0.100px;">Width</span>
<div class="inp" style="left:782px;top:180px;width:73px"></div>
<span class="t" style="left:789.60px;top:188.10px;font-size:14.0px;line-height:18px;color:#e8e8e8;">7</span>
<div class="sel2" style="left:865px;top:180px;width:182px"></div>
<span class="t" style="left:876.30px;top:188.80px;font-size:12.5px;line-height:16px;color:#e8e8e8;letter-spacing:0.180px;">Inches</span>
<svg class="a" style="left:1024.2px;top:193px" width="12" height="8" viewBox="0 0 12 8"><path d="M1.3 1.6 L6 6.2 L10.7 1.6" fill="none" stroke="#a4a4a4" stroke-width="1.4"/></svg>
<span class="t" style="left:781.40px;top:222.80px;font-size:11.0px;line-height:14px;color:#a6a6a6;letter-spacing:0.200px;">Height</span>
<span class="t" style="left:865.40px;top:222.80px;font-size:11.0px;line-height:14px;color:#a6a6a6;letter-spacing:0.110px;">Orientation</span>
<span class="t" style="left:961.20px;top:222.70px;font-size:11.0px;line-height:14px;color:#a6a6a6;letter-spacing:0.037px;">Artboards</span>
<div class="inp" style="left:782px;top:241px;width:73px"></div>
<span class="t" style="left:790.00px;top:249.20px;font-size:14.0px;line-height:18px;color:#e8e8e8;">5</span>
<svg class="a" style="left:872px;top:243px" width="22" height="28" viewBox="0 0 22 28"><rect x="1" y="1" width="20" height="26" fill="#2b2b2b" stroke="#7c7c7c" stroke-width="2"/><circle cx="11" cy="8.2" r="2.7" fill="#7c7c7c"/><path d="M6.2 14.2 Q6.2 12 8.4 12 H13.6 Q15.8 12 15.8 14.2 V20.5 H14.6 V26 H7.4 V20.5 H6.2 Z" fill="#7c7c7c"/></svg>
<svg class="a" style="left:909px;top:245px" width="28" height="23" viewBox="0 0 28 23"><rect x="1" y="1" width="26" height="21" fill="#262626" stroke="#459ff8" stroke-width="2"/><circle cx="14" cy="6.8" r="2.7" fill="#459ff8"/><path d="M9 12.8 Q9 10.6 11.2 10.6 H16.8 Q19 10.6 19 12.8 V19 H17.8 V21 H10.2 V19 H9 Z" fill="#459ff8"/></svg>
<div id="chk" class="a"></div>
<span class="t" style="left:781.70px;top:288.10px;font-size:11.0px;line-height:14px;color:#a6a6a6;letter-spacing:0.044px;">Resolution</span>
<div class="inp" style="left:782px;top:306px;width:73px"></div>
<span class="t" style="left:791.10px;top:313.70px;font-size:14.0px;line-height:18px;color:#e8e8e8;letter-spacing:0.100px;">300</span>
<div class="sel2" style="left:865px;top:306px;width:182px"></div>
<span class="t" style="left:876.20px;top:315.20px;font-size:12.5px;line-height:16px;color:#e8e8e8;letter-spacing:0.200px;">Pixels/Inch</span>
<svg class="a" style="left:1024.2px;top:319px" width="12" height="8" viewBox="0 0 12 8"><path d="M1.3 1.6 L6 6.2 L10.7 1.6" fill="none" stroke="#a4a4a4" stroke-width="1.4"/></svg>
<span class="t" style="left:782.40px;top:349.10px;font-size:11.0px;line-height:14px;color:#a6a6a6;letter-spacing:-0.044px;">Color Mode</span>
<div class="sel2" style="left:782px;top:367px;width:163px"></div>
<span class="t" style="left:793.50px;top:376.00px;font-size:12.5px;line-height:16px;color:#e8e8e8;letter-spacing:-0.088px;">RGB Color</span>
<svg class="a" style="left:922.4px;top:380px" width="12" height="8" viewBox="0 0 12 8"><path d="M1.3 1.6 L6 6.2 L10.7 1.6" fill="none" stroke="#a4a4a4" stroke-width="1.4"/></svg>
<div class="sel2" style="left:955px;top:367px;width:92px"></div>
<span class="t" style="left:967.50px;top:376.10px;font-size:12.5px;line-height:16px;color:#e8e8e8;letter-spacing:0.225px;">8 bit</span>
<svg class="a" style="left:1024.2px;top:380px" width="12" height="8" viewBox="0 0 12 8"><path d="M1.3 1.6 L6 6.2 L10.7 1.6" fill="none" stroke="#a4a4a4" stroke-width="1.4"/></svg>
<span class="t" style="left:781.40px;top:410.10px;font-size:11.0px;line-height:14px;color:#a6a6a6;letter-spacing:-0.017px;">Background Contents</span>
<div class="sel2" style="left:782px;top:428px;width:191px"></div>
<span class="t" style="left:794.20px;top:437.20px;font-size:12.5px;line-height:16px;color:#e8e8e8;letter-spacing:0.400px;">White</span>
<svg class="a" style="left:950.3px;top:441px" width="12" height="8" viewBox="0 0 12 8"><path d="M1.3 1.6 L6 6.2 L10.7 1.6" fill="none" stroke="#a4a4a4" stroke-width="1.4"/></svg>
<div id="swatch" class="a"></div>
<svg class="a" style="left:785px;top:475px" width="6" height="10" viewBox="0 0 6 10"><path d="M1 1 L5 5 L1 9" fill="none" stroke="#b4b4b4" stroke-width="1.5"/></svg>
<span class="t" style="left:795.80px;top:472.00px;font-size:12.0px;line-height:16px;color:#a6a6a6;letter-spacing:-0.233px;">Advanced Options</span>
<div id="close" class="a pill"></div>
<span class="t" style="left:913.30px;top:599.50px;font-size:13.0px;line-height:17px;color:#d4d4d4;letter-spacing:-0.325px;font-weight:700;">Close</span>
<div id="create" class="a pill"></div>
<span class="t" style="left:994.00px;top:599.50px;font-size:13.0px;line-height:17px;color:#ffffff;letter-spacing:0.100px;font-weight:700;">Create</span>
</aside>
</div>
</body></html>
